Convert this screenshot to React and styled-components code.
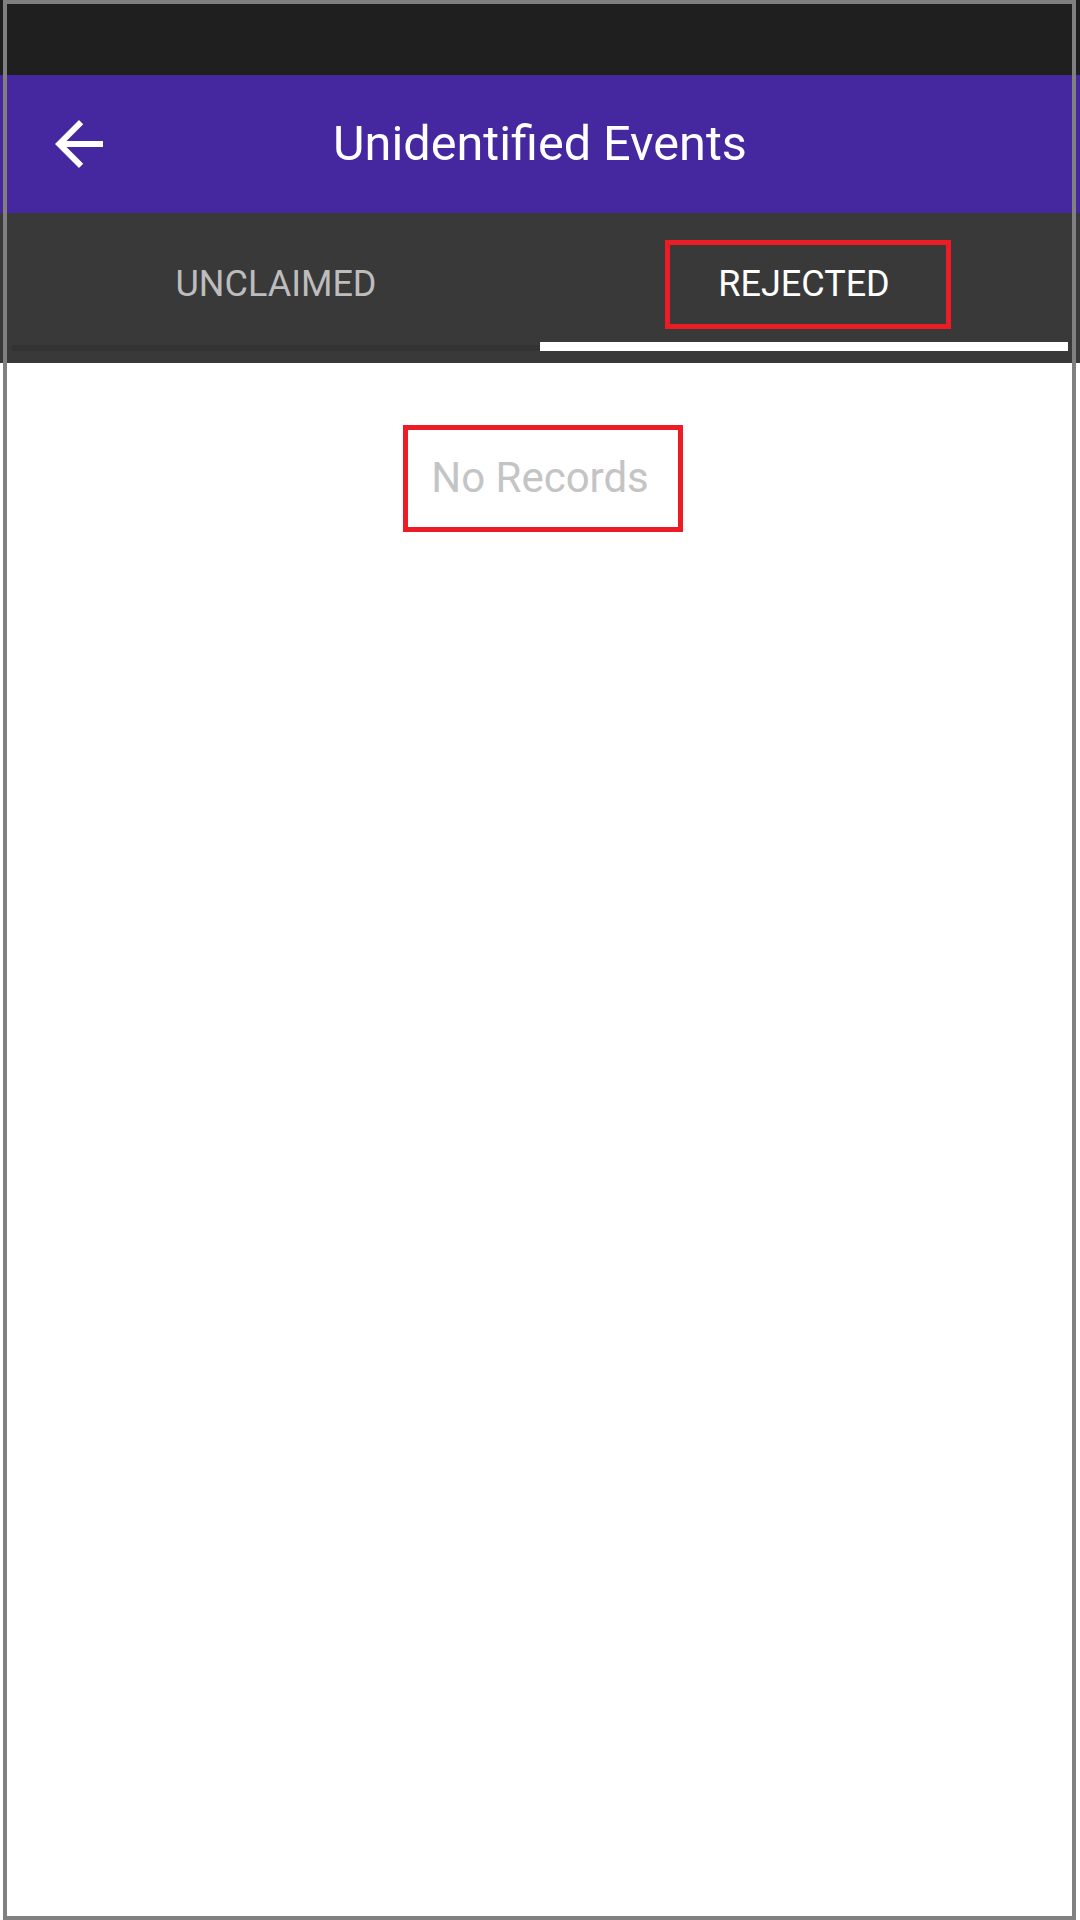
import React from 'react';
import styled, { createGlobalStyle } from 'styled-components';

const PURPLE = '#4527a0';
const STATUS = '#1f1f1f';
const TAB_BG = '#393939';
const MARK = '#ed1c24';

const GlobalStyle = createGlobalStyle`
  html, body {
    margin: 0;
    padding: 0;
    background: #ffffff;
  }

  body {
    font-family: Roboto, "Noto Sans", "Liberation Sans", sans-serif;
  }
`;

function BackArrow() {
  return (
    <svg width="72" height="72" viewBox="0 0 24 24" fill="#ffffff">
      <path d="M20 11H7.83l5.59-5.59L12 4l-8 8 8 8 1.41-1.41L7.83 13H20v-2z" />
    </svg>
  );
}

const tabs = [
  { key: 'unclaimed', label: 'UNCLAIMED' },
  { key: 'rejected', label: 'REJECTED' },
];

export default function App() {
  const active = 'rejected';

  return (
    <Screen>
      <GlobalStyle />
      <StatusBar />

      <AppBar>
        <NavButton aria-label="back">
          <BackArrow />
        </NavButton>
        <Title>Unidentified Events</Title>
      </AppBar>

      <TabBar>
        {tabs.map((tab) => (
          <Tab key={tab.key}>
            <TabLabelRow>
              <TabLabel active={tab.key === active} marked={tab.key === active}>
                {tab.label}
              </TabLabel>
            </TabLabelRow>
            <IndicatorRow>
              <Indicator active={tab.key === active} />
            </IndicatorRow>
          </Tab>
        ))}
      </TabBar>

      <Content>
        <EmptyBox>No Records</EmptyBox>
      </Content>

      <Frame />
    </Screen>
  );
}

const Screen = styled.div`
  position: relative;
  width: 1080px;
  height: 1920px;
  overflow: hidden;
  display: flex;
  flex-direction: column;
  background: #ffffff;
`;

const StatusBar = styled.div`
  height: 75px;
  flex-shrink: 0;
  background: ${STATUS};
`;

const AppBar = styled.header`
  height: 138px;
  flex-shrink: 0;
  background: ${PURPLE};
  display: grid;
  grid-template-columns: 1fr auto 1fr;
  align-items: center;
`;

const NavButton = styled.div`
  display: flex;
  align-items: center;
  margin-left: 43px;
  width: 72px;
  height: 72px;
`;

const Title = styled.h1`
  margin: 0;
  color: #ffffff;
  font-size: 48.6px;
  font-weight: 400;
  line-height: 1;
  white-space: nowrap;
`;

const TabBar = styled.nav`
  height: 150px;
  flex-shrink: 0;
  box-sizing: border-box;
  padding: 0 12px;
  background: ${TAB_BG};
  display: grid;
  grid-template-columns: 1fr 1fr;
`;

const Tab = styled.div`
  display: flex;
  flex-direction: column;
`;

const TabLabelRow = styled.div`
  height: 129px;
  box-sizing: border-box;
  padding-top: 13px;
  display: flex;
  align-items: center;
  justify-content: center;
`;

const TabLabel = styled.span`
  display: inline-flex;
  align-items: center;
  justify-content: center;
  box-sizing: border-box;
  color: ${(p) => (p.active ? '#ffffff' : '#bdbdbd')};
  font-size: 36px;
  font-weight: 400;
  height: ${(p) => (p.marked ? '89px' : 'auto')};
  padding: ${(p) => (p.marked ? '0 56px 0 48px' : '0')};
  margin-left: ${(p) => (p.marked ? '8px' : '0')};
  border: ${(p) => (p.marked ? `5px solid ${MARK}` : 'none')};
`;

const IndicatorRow = styled.div`
  height: 9px;
  display: flex;
  align-items: flex-end;
`;

const Indicator = styled.div`
  width: 100%;
  height: ${(p) => (p.active ? '9px' : '6px')};
  background: ${(p) => (p.active ? '#ffffff' : '#333333')};
`;

const Content = styled.main`
  flex: 1;
  display: flex;
  justify-content: center;
  align-items: flex-start;
  padding-top: 62px;
`;

const EmptyBox = styled.div`
  margin-left: 6px;
  padding: 23px 29px 25px 23px;
  border: 5px solid ${MARK};
  color: #c4c4c4;
  font-size: 42px;
  font-weight: 400;
  white-space: nowrap;
`;

const Frame = styled.div`
  position: absolute;
  top: 0;
  left: 3px;
  width: 1073px;
  height: 1920px;
  box-sizing: border-box;
  border: 4px solid #808080;
  pointer-events: none;
`;
